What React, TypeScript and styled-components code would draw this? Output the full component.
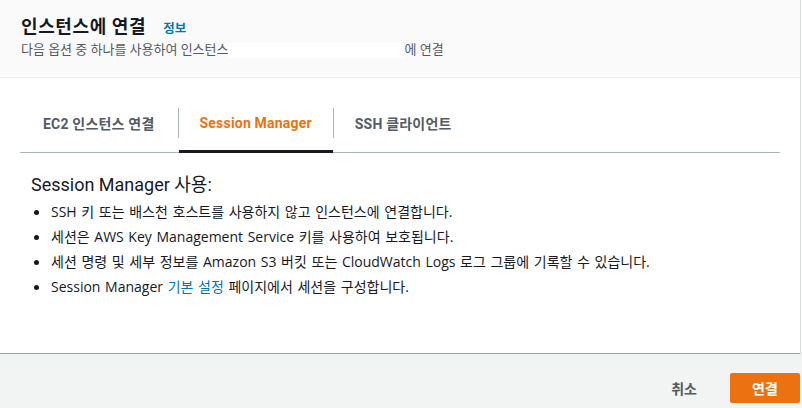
import React, { useState } from "react";
import styled, { createGlobalStyle } from "styled-components";

const Global = createGlobalStyle`
  html, body { margin: 0; padding: 0; background: #ffffff; }
  body { font-family: Roboto, "Noto Sans CJK KR", sans-serif; color: #16191f; }
  * { box-sizing: border-box; }
`;

const Page = styled.div`
  width: 802px;
  height: 408px;
  display: flex;
  flex-direction: column;
  background: #ffffff;
  overflow: hidden;
`;

const Panel = styled.div`
  width: 801px;
  border-right: 1px solid #d5dbdb;
  display: flex;
  flex-direction: column;
`;

const Header = styled.header`
  height: 78px;
  background: #fafafa;
  border-bottom: 1px solid #eaeded;
  padding: 14px 21px 0;
  display: flex;
  flex-direction: column;
`;

const TitleRow = styled.div`
  display: flex;
  align-items: baseline;
  gap: 17px;
  height: 26px;
`;

const Title = styled.h1`
  margin: 0;
  font-size: 18px;
  font-weight: 700;
  line-height: 26px;
  letter-spacing: 0.6px;
  color: #16191f;
`;

const InfoLink = styled.a`
  font-size: 12.5px;
  font-weight: 700;
  color: #0073bb;
  text-decoration: none;
`;

const Subtitle = styled.p`
  margin: 2px 0 0;
  font-size: 13px;
  line-height: 16px;
  color: #545b64;
  display: flex;
  align-items: center;
`;

const Redacted = styled.span`
  display: inline-block;
  width: 176px;
  height: 15px;
  background: #ffffff;
`;

const Content = styled.main`
  height: 276px;
  background: #ffffff;
  border-bottom: 1px solid #9aa3a3;
  padding: 30px 20px 0;
  display: flex;
  flex-direction: column;
`;

const TabList = styled.div`
  display: flex;
  align-items: stretch;
  height: 45px;
  border-bottom: 1px solid #aab7b8;
`;

const Tab = styled.button<{ $active?: boolean; $first?: boolean }>`
  position: relative;
  border: none;
  background: none;
  padding: ${(p) => (p.$first ? "0 23px" : "0 21px")};
  height: 44px;
  font-family: inherit;
  font-size: 14px;
  font-weight: 700;
  letter-spacing: 0.2px;
  color: ${(p) => (p.$active ? "#ec7211" : "#545b64")};
  display: flex;
  align-items: flex-start;
  cursor: pointer;
  span {
    display: flex;
    align-items: center;
    height: 30px;
  }
  &::after {
    content: "";
    position: absolute;
    left: 0;
    right: 0;
    bottom: -1px;
    height: 3px;
    background: ${(p) => (p.$active ? "#16191f" : "transparent")};
  }
`;

const TabDivider = styled.div`
  width: 1px;
  height: 30px;
  background: #aab7b8;
`;

const Body = styled.section`
  padding: 20px 11px 0;
`;

const Heading = styled.h2`
  margin: 0;
  font-size: 18px;
  font-weight: 400;
  line-height: 24px;
  color: #16191f;
`;

const List = styled.ul`
  margin: 2px 0 0;
  padding: 0 0 0 20px;
  list-style: none;
`;

const Item = styled.li`
  position: relative;
  font-family: "Open Sans", "Noto Sans CJK KR", sans-serif;
  font-size: 14px;
  line-height: 25px;
  word-spacing: 1px;
  color: #16191f;
  &::before {
    content: "";
    position: absolute;
    left: -17px;
    top: 11px;
    width: 5px;
    height: 5px;
    border-radius: 50%;
    background: #16191f;
  }
`;

const Link = styled.a`
  color: #0073bb;
  text-decoration: none;
`;

const Footer = styled.footer`
  flex: 1;
  background: #f2f3f3;
  display: flex;
  justify-content: flex-end;
  align-items: flex-start;
  padding: 19px 2px 0 0;
  gap: 13px;
`;

const CancelButton = styled.button`
  border: none;
  background: none;
  height: 30px;
  padding: 0 20px;
  font-family: inherit;
  font-size: 14px;
  font-weight: 700;
  color: #545b64;
  cursor: pointer;
`;

const PrimaryButton = styled.button`
  border: none;
  border-radius: 2px;
  background: #ec7211;
  width: 70px;
  height: 30px;
  font-family: inherit;
  font-size: 14px;
  font-weight: 700;
  color: #ffffff;
  cursor: pointer;
`;

export default function App() {
  const [tab, setTab] = useState(1);
  const tabs = ["EC2 인스턴스 연결", "Session Manager", "SSH 클라이언트"];
  return (
    <Page>
      <Global />
      <Panel>
        <Header>
          <TitleRow>
            <Title>인스턴스에 연결</Title>
            <InfoLink href="#">정보</InfoLink>
          </TitleRow>
          <Subtitle>
            다음 옵션 중 하나를 사용하여 인스턴스
            <Redacted />에 연결
          </Subtitle>
        </Header>
        <Content>
          <TabList>
            {tabs.map((t, i) => (
              <React.Fragment key={t}>
                {i > 0 && <TabDivider />}
                <Tab $active={tab === i} $first={i === 0} onClick={() => setTab(i)}>
                  <span>{t}</span>
                </Tab>
              </React.Fragment>
            ))}
          </TabList>
          <Body>
            <Heading>Session Manager 사용:</Heading>
            <List>
              <Item>SSH 키 또는 배스천 호스트를 사용하지 않고 인스턴스에 연결합니다.</Item>
              <Item>세션은 AWS Key Management Service 키를 사용하여 보호됩니다.</Item>
              <Item>세션 명령 및 세부 정보를 Amazon S3 버킷 또는 CloudWatch Logs 로그 그룹에 기록할 수 있습니다.</Item>
              <Item>
                Session Manager <Link href="#">기본 설정</Link> 페이지에서 세션을 구성합니다.
              </Item>
            </List>
          </Body>
        </Content>
      </Panel>
      <Footer>
        <CancelButton>취소</CancelButton>
        <PrimaryButton>연결</PrimaryButton>
      </Footer>
    </Page>
  );
}
